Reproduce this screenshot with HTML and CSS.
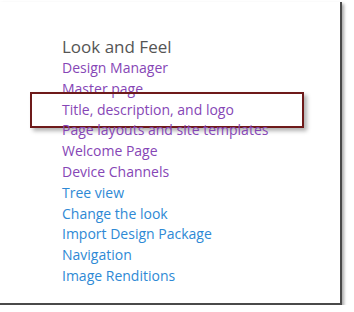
FILE: index.html
```html
<!DOCTYPE html>
<html lang="en">

<head>
  <meta charset="UTF-8">
  <meta name="viewport" content="width=device-width, initial-scale=1.0">
  <title>Look and Feel</title>

  <link rel="stylesheet" href="styles.css">
</head>

<body>
  <main class="frame">
    <section class="settings-group">
      <h2 class="group-title">Look and Feel</h2>
      <ul class="links">
        <li><a class="visited" href="#">Design Manager</a></li>
        <li><a class="visited" href="#">Master page</a></li>
        <li class="highlighted"><a class="visited" href="#">Title, description, and logo</a></li>
        <li><a class="visited" href="#">Page layouts and site templates</a></li>
        <li><a class="visited" href="#">Welcome Page</a></li>
        <li><a class="visited" href="#">Device Channels</a></li>
        <li><a href="#">Tree view</a></li>
        <li><a href="#">Change the look</a></li>
        <li><a href="#">Import Design Package</a></li>
        <li><a href="#">Navigation</a></li>
        <li><a href="#">Image Renditions</a></li>
      </ul>
    </section>
  </main>
</body>

</html>
```

FILE: styles.css
```css
body {
  background: #fff;
  font-family: "Open Sans", "Noto Sans", sans-serif;
  margin: 0;
}

.frame {
  border-bottom: 2px solid #4a4a4a;
  border-right: 2px solid #4a4a4a;
  box-shadow: 2px 2px 3px rgba(0, 0, 0, 0.35);
  box-sizing: border-box;
  height: 303px;
  margin-top: 2px;
  width: 342px;
}

.settings-group {
  padding: 34px 0 0 62px;
}

.group-title {
  color: #555;
  font-size: 17px;
  font-weight: normal;
  line-height: 22px;
  margin: 0;
}

.links {
  list-style: none;
  margin: 0;
  padding: 0;
}

.links li {
  font-size: 14px;
  line-height: 20.8px;
  position: relative;
}

.links a {
  color: #2e89d5;
  text-decoration: none;
}

.links a.visited {
  color: #8646b6;
}

.highlighted::after {
  border: 2px solid #6e1a1a;
  box-shadow: 3px 3px 4px rgba(0, 0, 0, 0.3);
  content: "";
  height: 32px;
  left: -32px;
  position: absolute;
  top: -8px;
  width: 270px;
}
```
